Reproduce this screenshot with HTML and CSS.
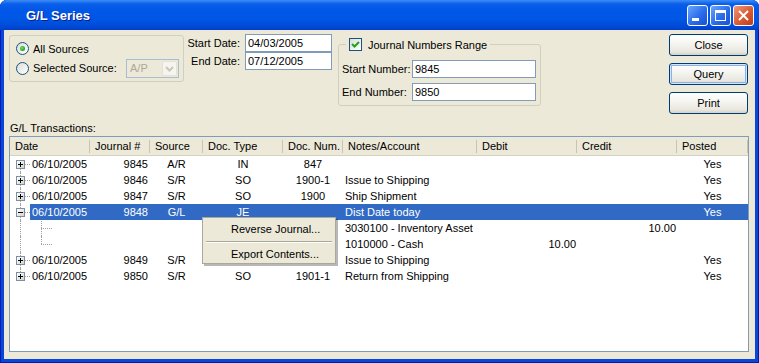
FILE: index.html
```html
<!DOCTYPE html>
<html>
<head>
  <title>G/L Series</title>
  <link rel="stylesheet" href="styles.css">
</head>
<body>
  <div class="window">
    <div class="titlebar">
      <span class="title">G/L Series</span>
      <div class="ctrls">
        <span class="ctrl"><svg width="19" height="19"><rect x="4" y="12" width="7" height="3" fill="#fff"/></svg></span>
        <span class="ctrl"><svg width="19" height="19"><rect x="4.5" y="4.5" width="10" height="10" fill="none" stroke="#fff"/><rect x="4" y="4" width="11" height="3" fill="#fff"/></svg></span>
        <span class="ctrl close"><svg width="19" height="19"><path d="M5 5L14 14M14 5L5 14" stroke="#fff" stroke-width="2" fill="none"/></svg></span>
      </div>
    </div>

    <div class="client">
      <div class="top">
        <div class="srcbox">
          <div class="opt"><span class="radio on"></span><span>All Sources</span></div>
          <div class="opt opt2">
            <span class="radio"></span><span>Selected Source:</span>
            <span class="combo">
              <span>A/P</span>
              <span class="drop"><svg width="13" height="13"><path d="M3 5l3.5 3.5L10 5" stroke="#C9C7BA" stroke-width="2" fill="none"/></svg></span>
            </span>
          </div>
        </div>

        <div class="dates">
          <label>Start Date:</label><span class="field">04/03/2005</span>
          <label>End Date:</label><span class="field">07/12/2005</span>
        </div>

        <fieldset class="jgroup">
          <legend><span class="check"><svg width="11" height="11"><path d="M2 5l2.5 2.5L9 3" stroke="#21A121" stroke-width="2" fill="none"/></svg></span>Journal Numbers Range</legend>
          <div class="jgrid">
            <label>Start Number:</label><span class="field">9845</span>
            <label>End Number:</label><span class="field">9850</span>
          </div>
        </fieldset>

        <div class="buttons">
          <button>Close</button>
          <button class="default">Query</button>
          <button>Print</button>
        </div>
      </div>

      <div class="caption">G/L Transactions:</div>

      <div class="grid">
        <div class="head">
          <span>Date</span><span>Journal #</span><span>Source</span><span>Doc. Type</span><span>Doc. Num.</span><span>Notes/Account</span><span>Debit</span><span>Credit</span><span>Posted</span>
        </div>

        <div class="row first">
          <div class="tree"><span class="exp plus"></span></div>
          <div class="cells"><span>06/10/2005</span><span>9845</span><span>A/R</span><span>IN</span><span>847</span><span></span><span></span><span></span><span>Yes</span></div>
        </div>
        <div class="row">
          <div class="tree"><span class="exp plus"></span></div>
          <div class="cells"><span>06/10/2005</span><span>9846</span><span>S/R</span><span>SO</span><span>1900-1</span><span>Issue to Shipping</span><span></span><span></span><span>Yes</span></div>
        </div>
        <div class="row">
          <div class="tree"><span class="exp plus"></span></div>
          <div class="cells"><span>06/10/2005</span><span>9847</span><span>S/R</span><span>SO</span><span>1900</span><span>Ship Shipment</span><span></span><span></span><span>Yes</span></div>
        </div>
        <div class="row sel">
          <div class="tree"><span class="exp"></span></div>
          <div class="cells"><span>06/10/2005</span><span>9848</span><span>G/L</span><span>JE</span><span></span><span>Dist Date today</span><span></span><span></span><span>Yes</span></div>
        </div>
        <div class="row child">
          <div class="tree"></div>
          <div class="cells"><span class="kid"></span><span></span><span></span><span></span><span></span><span>3030100 - Inventory Asset</span><span></span><span>10.00</span><span></span></div>
        </div>
        <div class="row child">
          <div class="tree"></div>
          <div class="cells"><span class="kid end"></span><span></span><span></span><span></span><span></span><span>1010000 - Cash</span><span>10.00</span><span></span><span></span></div>
        </div>
        <div class="row">
          <div class="tree"><span class="exp plus"></span></div>
          <div class="cells"><span>06/10/2005</span><span>9849</span><span>S/R</span><span></span><span></span><span>Issue to Shipping</span><span></span><span></span><span>Yes</span></div>
        </div>
        <div class="row last">
          <div class="tree"><span class="exp plus"></span></div>
          <div class="cells"><span>06/10/2005</span><span>9850</span><span>S/R</span><span>SO</span><span>1901-1</span><span>Return from Shipping</span><span></span><span></span><span>Yes</span></div>
        </div>

        <div class="menu">
          <div class="item">Reverse Journal...</div>
          <hr>
          <div class="item">Export Contents...</div>
        </div>
      </div>
    </div>
  </div>
</body>
</html>
```

FILE: styles.css
```css
* {
  box-sizing: border-box;
}
body {
  margin: 0;
  background: #fff;
  font-family: "Liberation Sans", Arial, sans-serif;
  font-size: 11px;
  color: #000;
}
.window {
  width: 759px;
  height: 363px;
  display: flex;
  flex-direction: column;
  background: #0847D8;
  border-radius: 7px 7px 0 0;
  overflow: hidden;
  box-shadow: inset 1px 0 #001CB0, inset -1px 0 #001CB0, inset 0 -1px #001CB0;
}
.titlebar {
  height: 30px;
  flex: none;
  display: flex;
  align-items: center;
  padding: 0 5px 0 26px;
  background: linear-gradient(#3D8DF6, #0A5EEA 4px, #0058E8 10px, #0055E4 20px, #0049D4 27px, #003DC8 30px);
}
.title {
  flex: 1;
  color: #fff;
  font-weight: bold;
  font-size: 13px;
  text-shadow: 1px 1px #0A1D8C;
}
.ctrls {
  display: flex;
  gap: 2px;
}
.ctrl {
  display: block;
  width: 21px;
  height: 21px;
  border: 1px solid #fff;
  border-radius: 3px;
  background: linear-gradient(135deg, #6AA6FF, #2A6CEC 55%, #1A50D2);
}
.ctrl svg {
  display: block;
}
.ctrl.close {
  background: linear-gradient(135deg, #F0987A, #DB5A33 55%, #C03A1C);
}

.client {
  flex: 1;
  min-height: 0;
  display: flex;
  flex-direction: column;
  margin: 0 4px 4px;
  padding: 0 6px 7px 5px;
  background: #ECE9D8;
}
.top {
  height: 91px;
  flex: none;
  display: flex;
  align-items: flex-start;
  padding-top: 4px;
}

.srcbox {
  margin-top: 1px;
  width: 175px;
  height: 47px;
  border: 1px solid #D0D0BF;
  border-radius: 3px;
  padding: 4px 4px 0 6px;
}
.opt {
  display: flex;
  align-items: center;
  height: 17px;
}
.opt2 {
  height: 20px;
  margin-top: 1px;
}
.radio {
  flex: none;
  width: 13px;
  height: 13px;
  margin-right: 4px;
  border: 1px solid #1C5180;
  border-radius: 50%;
  background: linear-gradient(135deg, #DCDCD7, #fff);
  display: flex;
  align-items: center;
  justify-content: center;
}
.radio.on::after {
  content: "";
  width: 5px;
  height: 5px;
  border-radius: 50%;
  background: radial-gradient(circle at 40% 40%, #6CE66C, #21A121 70%, #188A18);
}
.combo {
  margin-left: auto;
  width: 53px;
  height: 19px;
  border: 1px solid #A9BCD2;
  display: flex;
  align-items: center;
  padding-left: 3px;
  color: #ACA899;
}
.drop {
  margin-left: auto;
  margin-right: 1px;
  width: 15px;
  height: 15px;
  border: 1px solid #E4E2D6;
  border-radius: 2px;
  background: #F5F4EE;
  display: flex;
  align-items: center;
  justify-content: center;
}

.dates {
  margin-left: 6px;
  display: grid;
  grid-template-columns: 50px 87px;
  column-gap: 5px;
  align-items: center;
}
.dates label {
  display: flex;
  justify-content: flex-end;
  white-space: nowrap;
}
.field {
  height: 18px;
  line-height: 16px;
  padding-left: 2px;
  border: 1px solid #7F9DB9;
  background: #fff;
}

.jgroup {
  margin: 4px 0 0 6px;
  width: 203px;
  min-width: 0;
  border: 1px solid #D0D0BF;
  border-radius: 3px;
  padding: 9px 3px 4px 3px;
}
.jgroup legend {
  display: flex;
  align-items: center;
  height: 13px;
  padding: 0 3px;
  margin-left: 4px;
}
.check {
  width: 13px;
  height: 13px;
  margin-right: 6px;
  border: 1px solid #1C5180;
  background: linear-gradient(135deg, #DCDCD7, #fff);
}
.check svg {
  display: block;
}
.jgrid {
  display: grid;
  grid-template-columns: 70px 124px;
  row-gap: 5px;
  align-items: center;
}
.jgrid label {
  white-space: nowrap;
}

.buttons {
  margin: 0 1px 0 auto;
  display: flex;
  flex-direction: column;
  gap: 7px;
}
.buttons button {
  width: 79px;
  height: 22px;
  padding: 0;
  border: 1px solid #003C74;
  border-radius: 3px;
  background: linear-gradient(#fff, #F4F4F0 45%, #E8E6DD 85%, #D6D0C5);
  font: 11px "Liberation Sans", Arial, sans-serif;
  color: #000;
}
.buttons .default {
  box-shadow: inset 0 0 0 1px #CEE7FF, inset 0 0 0 2px #8EB0E6;
}

.caption {
  flex: none;
  height: 15px;
  line-height: 15px;
  padding-left: 1px;
}
.grid {
  flex: 1;
  position: relative;
  border: 1px solid #7F9DB9;
  background: #fff;
}
.head {
  display: grid;
  grid-template-columns: 80px 60px 53px 80px 60px 134px 100px 100px 71px;
  height: 19px;
  background: #ECE9D8;
  box-shadow: inset 0 -1px #D6D2C2;
}
.head span {
  padding-left: 5px;
  line-height: 18px;
  white-space: nowrap;
  background: linear-gradient(#C7C5B2, #C7C5B2) no-repeat right 0 top 3px / 1px 13px;
}

.row {
  display: flex;
  height: 16px;
  line-height: 16px;
}
.tree {
  flex: none;
  width: 20px;
  position: relative;
}
.tree::before {
  content: "";
  position: absolute;
  left: 10px;
  top: 0;
  bottom: 0;
  border-left: 1px dotted #A0A0A0;
}
.row.first .tree::before {
  top: 13px;
}
.row.last .tree::before {
  bottom: 12px;
}
.row:not(.child) .tree::after {
  content: "";
  position: absolute;
  left: 15px;
  top: 8px;
  width: 5px;
  border-top: 1px dotted #A0A0A0;
}
.exp {
  position: absolute;
  left: 6px;
  top: 4px;
  width: 9px;
  height: 9px;
  z-index: 1;
  border: 1px solid #7B8FA8;
  background: linear-gradient(135deg, #fff, #D6D3C8);
}
.exp::before {
  content: "";
  position: absolute;
  left: 1px;
  top: 3px;
  width: 5px;
  height: 1px;
  background: #000;
}
.exp.plus::after {
  content: "";
  position: absolute;
  left: 3px;
  top: 1px;
  width: 1px;
  height: 5px;
  background: #000;
}

.cells {
  flex: 1;
  display: grid;
  grid-template-columns: 60px 60px 53px 80px 60px 134px 100px 100px 71px;
}
.row.sel .cells {
  background: #316AC5;
  color: #fff;
}
.cells span {
  white-space: nowrap;
  overflow: hidden;
}
.cells span:nth-child(1),
.cells span:nth-child(6) {
  padding-left: 2px;
}
.cells span:nth-child(2) {
  text-align: right;
  padding-right: 2px;
}
.cells span:nth-child(3),
.cells span:nth-child(4),
.cells span:nth-child(5),
.cells span:nth-child(9) {
  text-align: center;
}
.cells span:nth-child(7),
.cells span:nth-child(8) {
  text-align: right;
  padding-right: 1px;
}
.kid {
  position: relative;
}
.kid::before {
  content: "";
  position: absolute;
  left: 11px;
  top: 1px;
  bottom: 0;
  border-left: 1px dotted #A0A0A0;
}
.kid.end::before {
  top: 0;
  bottom: 8px;
}
.kid::after {
  content: "";
  position: absolute;
  left: 11px;
  top: 8px;
  width: 11px;
  border-top: 1px dotted #A0A0A0;
}

.menu {
  position: absolute;
  left: 192px;
  top: 80px;
  width: 134px;
  padding: 2px 1px 0;
  border: 1px solid #ACA899;
  background: #ECE9D8;
  box-shadow: 2px 2px 0 rgba(0, 0, 0, 0.28);
}
.menu .item {
  height: 18px;
  line-height: 18px;
  padding-left: 27px;
}
.menu hr {
  margin: 3px 2px 2px;
  border: 0;
  border-top: 1px solid #ACA899;
  border-bottom: 1px solid #fff;
}
```
